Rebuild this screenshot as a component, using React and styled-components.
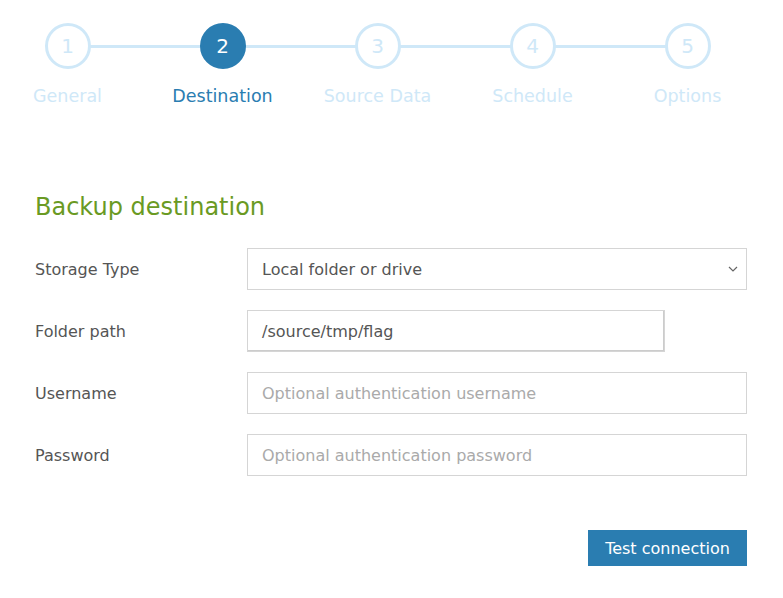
import React from "react";
import styled, { createGlobalStyle } from "styled-components";

const Global = createGlobalStyle`
  html, body { margin: 0; padding: 0; background: #fff; }
  body { font-family: "DejaVu Sans", "Open Sans", sans-serif; overflow: hidden; }
`;

const Page = styled.div`
  width: 783px;
  height: 598px;
  padding: 0 36px 0 35px;
  box-sizing: border-box;
`;

const Steps = styled.div`
  display: grid;
  grid-template-columns: repeat(5, 155px);
  position: relative;
  padding-top: 23px;
  margin-left: -45px;
`;

const StepLine = styled.div`
  position: absolute;
  top: 45px;
  left: 78px;
  width: 620px;
  height: 3px;
  background: #cfe8f8;
`;

const Step = styled.div`
  display: flex;
  flex-direction: column;
  align-items: center;
  position: relative;
  z-index: 1;
`;

const Circle = styled.div`
  width: 46px;
  height: 46px;
  box-sizing: border-box;
  border-radius: 50%;
  border: 3px solid ${(p) => (p.$active ? "#2a7db1" : "#cfe8f8")};
  background: ${(p) => (p.$active ? "#2a7db1" : "#fff")};
  color: ${(p) => (p.$active ? "#fff" : "#cfe8f8")};
  display: flex;
  align-items: center;
  justify-content: center;
  font-size: 20px;
`;

const StepLabel = styled.div`
  margin-top: 17px;
  font-size: 17.5px;
  white-space: nowrap;
  color: ${(p) => (p.$active ? "#2a7db1" : "#cfe8f8")};
`;

const Heading = styled.h2`
  margin: 86px 0 0;
  font-weight: normal;
  font-size: 24px;
  color: #6a9a23;
  line-height: 30px;
`;

const Form = styled.div`
  margin-top: 26px;
  display: flex;
  flex-direction: column;
  gap: 20px;
`;

const Row = styled.div`
  display: flex;
  align-items: center;
`;

const Label = styled.label`
  width: 212px;
  font-size: 16px;
  color: #555;
`;

const Field = styled.div`
  width: ${(p) => p.$w || "500px"};
  height: 42px;
  box-sizing: border-box;
  border: 1px solid #d5d5d5;
  ${(p) => p.$shadow && "box-shadow: inset 0 -1px 0 #ccc, inset -1px 0 0 #ccc;"}
  display: flex;
  align-items: center;
  justify-content: space-between;
  padding: 0 8px 0 14px;
  font-size: 16px;
  color: ${(p) => (p.$placeholder ? "#aaa" : "#555")};
  background: #fff;
`;

const Footer = styled.div`
  display: flex;
  justify-content: flex-end;
  margin-top: 54px;
`;

const Button = styled.button`
  background: #2a7db1;
  color: #fff;
  border: none;
  height: 36px;
  width: 159px;
  font-family: inherit;
  font-size: 16px;
  padding: 0;
`;

const steps = ["General", "Destination", "Source Data", "Schedule", "Options"];

export default function App() {
  return (
    <Page>
      <Global />
      <Steps>
        <StepLine />
        {steps.map((s, i) => (
          <Step key={s}>
            <Circle $active={i === 1}>{i + 1}</Circle>
            <StepLabel $active={i === 1}>{s}</StepLabel>
          </Step>
        ))}
      </Steps>
      <Heading>Backup destination</Heading>
      <Form>
        <Row>
          <Label>Storage Type</Label>
          <Field>
            <span>Local folder or drive</span>
            <svg width="10" height="6" viewBox="0 0 10 6">
              <path d="M1 1l4 4 4-4" fill="none" stroke="#666" strokeWidth="1.2" />
            </svg>
          </Field>
        </Row>
        <Row>
          <Label>Folder path</Label>
          <Field $w="418px" $shadow>/source/tmp/flag</Field>
        </Row>
        <Row>
          <Label>Username</Label>
          <Field $placeholder>Optional authentication username</Field>
        </Row>
        <Row>
          <Label>Password</Label>
          <Field $placeholder>Optional authentication password</Field>
        </Row>
      </Form>
      <Footer>
        <Button>Test connection</Button>
      </Footer>
    </Page>
  );
}
